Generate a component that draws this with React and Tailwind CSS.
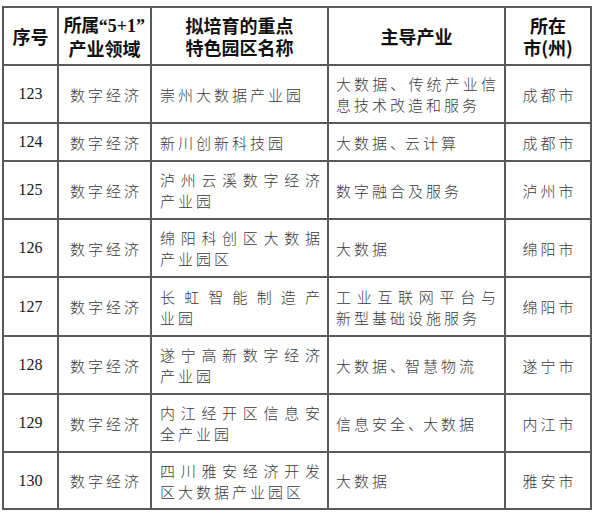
import React from "react";

const rows = [
  { n: "123", name: [["崇州大数据产业园", false]], ind: [["大数据、传统产业信", true], ["息技术改造和服务", false]], city: "成都市" },
  { n: "124", name: [["新川创新科技园", false]], ind: [["大数据、云计算", false]], city: "成都市" },
  { n: "125", name: [["泸州云溪数字经济", true], ["产业园", false]], ind: [["数字融合及服务", false]], city: "泸州市" },
  { n: "126", name: [["绵阳科创区大数据", true], ["产业园区", false]], ind: [["大数据", false]], city: "绵阳市" },
  { n: "127", name: [["长虹智能制造产", true], ["业园", false]], ind: [["工业互联网平台与", true], ["新型基础设施服务", false]], city: "绵阳市" },
  { n: "128", name: [["遂宁高新数字经济", true], ["产业园", false]], ind: [["大数据、智慧物流", false]], city: "遂宁市" },
  { n: "129", name: [["内江经开区信息安", true], ["全产业园", false]], ind: [["信息安全、大数据", false]], city: "内江市" },
  { n: "130", name: [["四川雅安经济开发", true], ["区大数据产业园区", false]], ind: [["大数据", false]], city: "雅安市" },
];

function chars(t, j) {
  return [...t].map((c, i) =>
    c === "、" ? (
      <span key={i} className={j ? "" : "tracking-normal"}>、</span>
    ) : (
      <span key={i}>{c}</span>
    )
  );
}

function Line({ t, j }) {
  if (j) {
    return <div className="flex justify-between">{chars(t, true)}</div>;
  }
  return <div className="tracking-[3px] whitespace-nowrap">{chars(t, false)}</div>;
}

const cjk = "font-['Noto_Sans_CJK_SC',sans-serif]";
const body = `${cjk} font-light text-[15px] leading-[21px] text-[#3a3a3a]`;
const head = `${cjk} font-bold text-[18px] leading-[22px] text-[#111]`;

export default function App() {
  return (
    <div className="w-[596px] h-[514px] bg-white pt-[6px] pl-[2px]">
      <div className="grid w-[590px] grid-cols-[53px_91px_175px_175px_84px] grid-rows-[56px_56px_36px_56px_56px_57px_56px_56px_55px] gap-[2px] bg-[#5a5a5a] p-[2px]">
        <div className={`bg-white flex items-center justify-center ${head}`}>序号</div>
        <div className={`bg-white flex flex-col items-center justify-center ${head}`}>
          <div className="whitespace-nowrap tracking-[-0.5px]">
            所属<span className="font-['Liberation_Serif',serif] font-bold tracking-normal">“5+1”</span>
          </div>
          <div>产业领域</div>
        </div>
        <div className={`bg-white flex flex-col items-center justify-center ${head}`}>
          <div>拟培育的重点</div>
          <div>特色园区名称</div>
        </div>
        <div className={`bg-white flex items-center justify-center ${head}`}>主导产业</div>
        <div className={`bg-white flex flex-col items-center justify-center ${head}`}>
          <div>所在</div>
          <div>市(州)</div>
        </div>

        {rows.map((r) => (
          <React.Fragment key={r.n}>
            <div className="bg-white flex items-center justify-center font-['Liberation_Serif',serif] text-[16px] text-[#1a1a1a]">
              {r.n}
            </div>
            <div className={`bg-white flex items-center justify-center pl-[3px] ${body}`}>
              <div className="tracking-[3px]">数字经济</div>
            </div>
            <div className={`bg-white flex flex-col justify-center pl-[8px] pr-[7px] ${body}`}>
              {r.name.map(([t, j], i) => (
                <Line key={i} t={t} j={j} />
              ))}
            </div>
            <div className={`bg-white flex flex-col justify-center pl-[7px] pr-[8px] ${body}`}>
              {r.ind.map(([t, j], i) => (
                <Line key={i} t={t} j={j} />
              ))}
            </div>
            <div className={`bg-white flex items-center justify-center pl-[3px] ${body}`}>
              <div className="tracking-[3px]">{r.city}</div>
            </div>
          </React.Fragment>
        ))}
      </div>
    </div>
  );
}
